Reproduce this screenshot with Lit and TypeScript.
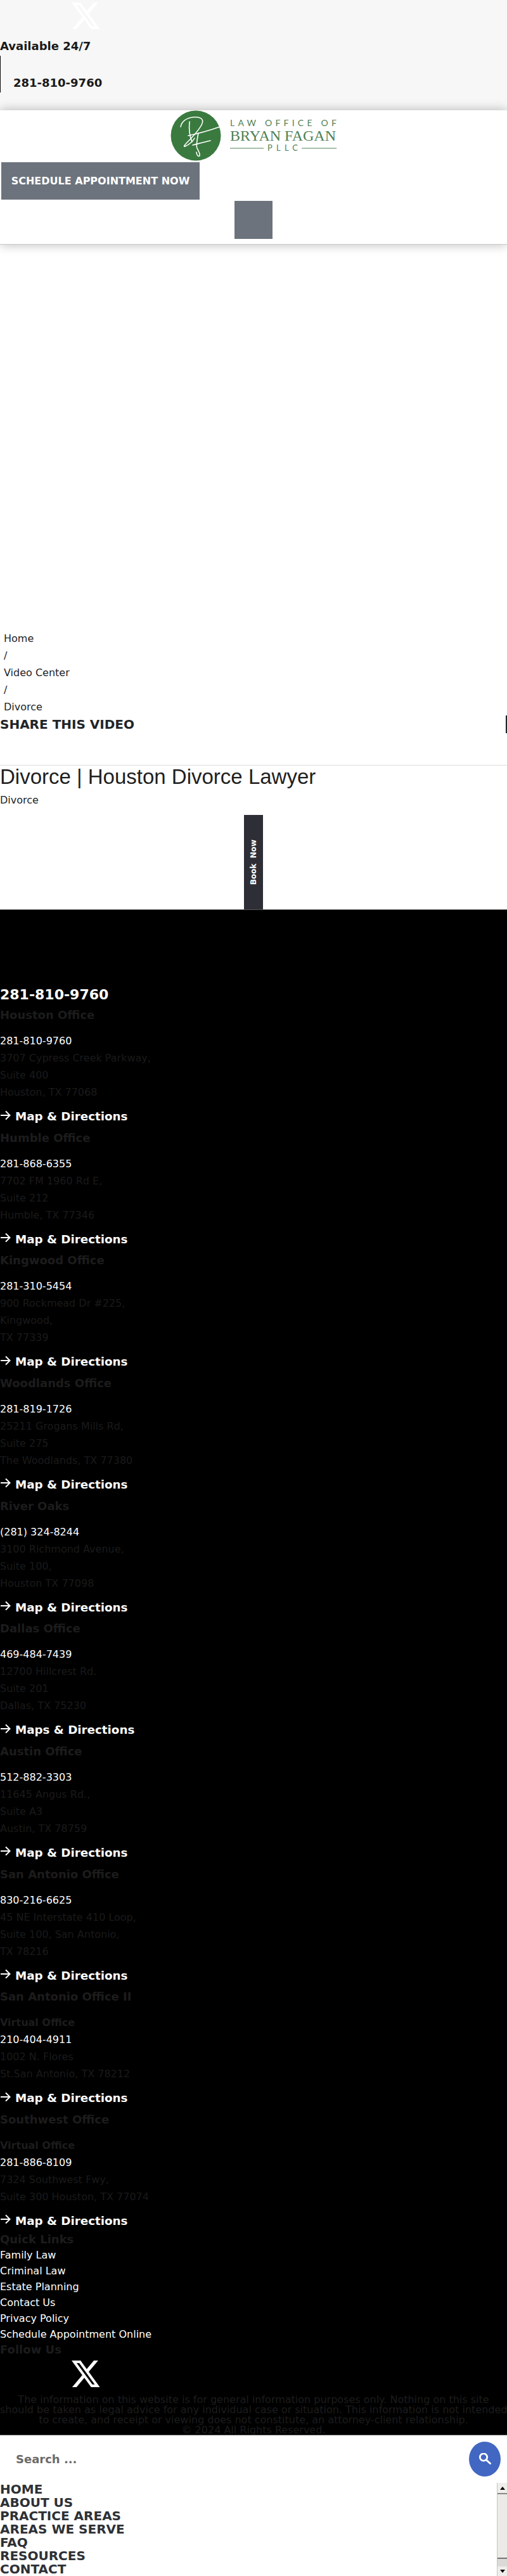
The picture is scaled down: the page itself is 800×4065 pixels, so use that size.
import { LitElement, html, css, svg } from "lit";
import { customElement } from "lit/decorators.js";

interface Office { name: string; sub?: string; phone: string; lines: string[]; map?: string; }
const OFFICES: Office[] = [
  { name: "Houston Office", phone: "281-810-9760", lines: ["3707 Cypress Creek Parkway,", "Suite 400", "Houston, TX 77068"] },
  { name: "Humble Office", phone: "281-868-6355", lines: ["7702 FM 1960 Rd E,", "Suite 212", "Humble, TX 77346"] },
  { name: "Kingwood Office", phone: "281-310-5454", lines: ["900 Rockmead Dr #225,", "Kingwood,", "TX 77339"] },
  { name: "Woodlands Office", phone: "281-819-1726", lines: ["25211 Grogans Mills Rd,", "Suite 275", "The Woodlands, TX 77380"] },
  { name: "River Oaks", phone: "(281) 324-8244", lines: ["3100 Richmond Avenue,", "Suite 100,", "Houston TX 77098"] },
  { name: "Dallas Office", phone: "469-484-7439", lines: ["12700 Hillcrest Rd.", "Suite 201", "Dallas, TX 75230"], map: "Maps & Directions" },
  { name: "Austin Office", phone: "512-882-3303", lines: ["11645 Angus Rd.,", "Suite A3", "Austin, TX 78759"] },
  { name: "San Antonio Office", phone: "830-216-6625", lines: ["45 NE Interstate 410 Loop,", "Suite 100, San Antonio,", "TX 78216"] },
  { name: "San Antonio Office II", sub: "Virtual Office", phone: "210-404-4911", lines: ["1002 N. Flores", "St.San Antonio, TX 78212"] },
  { name: "Southwest Office", sub: "Virtual Office", phone: "281-886-8109", lines: ["7324 Southwest Fwy,", "Suite 300 Houston, TX 77074"] },
];
const QUICK = ["Family Law", "Criminal Law", "Estate Planning", "Contact Us", "Privacy Policy", "Schedule Appointment Online"];
const MENU = ["HOME", "ABOUT US", "PRACTICE AREAS", "AREAS WE SERVE", "FAQ", "RESOURCES", "CONTACT"];

const xIcon = svg`<svg class="x" viewBox="1.25 2.25 21.31 19.5" width="44" height="42" preserveAspectRatio="none" aria-hidden="true">
  <path fill="#fff" d="M18.244 2.25h3.308l-7.227 8.26 8.502 11.24H16.17l-5.214-6.817L4.99 21.75H1.68l7.73-8.835L1.254 2.25H8.08l4.713 6.231zm-1.161 17.52h1.833L7.084 4.126H5.117z"/>
</svg>`;

const arrow = svg`<svg class="arrow" viewBox="0 0 17 16" width="17" height="16" aria-hidden="true">
  <path d="M1 8H15M9 1.5L15.5 8L9 14.5" fill="none" stroke="#fff" stroke-width="2"/></svg>`;

@customElement("app-root")
export class AppRoot extends LitElement {
  static styles = css`
    :host { display: block; width: 800px; height: 4065px; overflow: hidden; font-family: "DejaVu Sans", sans-serif; font-size: 16px; line-height: 27px; color: #212529; background: #fff; }
    a { color: inherit; text-decoration: none; }
    .top { height: 174px; background: #f6f7f6; box-sizing: border-box; padding-top: 4px; display: flex; flex-direction: column; }
    .top .x { margin-left: 113px; display: block; }
    .avail { margin-top: 13px; font-weight: 700; font-size: 18px; line-height: 27px; color: #1a1a1a; }
    .topphone { margin-top: 2px; height: 58px; width: fit-content; border-left: 1px solid #111; padding: 29px 0 0 20px; box-sizing: border-box; font-weight: 700; font-size: 18px; line-height: 27px; color: #1a1a1a; }
    .header { position: relative; height: 212px; background: #fff; box-shadow: 0 0 16px rgba(0,0,0,.28); display: flex; flex-direction: column; border-bottom: 1px solid #ccc; box-sizing: border-box; }
    .logo { display: block; margin-left: 260px; width: 290px; height: 82px; }
    .cta { margin-left: 2px; width: 313px; height: 59px; background: #6c737d; color: #fff; font-weight: 700; font-size: 16px; display: flex; align-items: center; justify-content: center; }
    .sq { margin: 2px 0 0 370px; width: 60px; height: 60px; background: #6c737d; }
    .crumbs { margin-top: 608px; padding-left: 6px; height: 135px; }
    .crumbs div { height: 27px; }
    .share { display: flex; justify-content: space-between; align-items: center; height: 28px; font-weight: 700; font-size: 20px; line-height: 28px; }
    .share i { display: block; width: 2px; height: 28px; background: #212529; }
    .rule { margin-top: 50px; border-top: 1px solid #ddd; }
    h1 { margin: 0; font: 400 33px/36px "Liberation Sans", Arial, sans-serif; color: #1f1f1f; }
    .sub { margin-top: 5px; }
    .bookwrap { display: flex; justify-content: center; margin-top: 10px; }
    .book { width: 30px; height: 149px; background: #2e2f36; color: #fff; display: flex; align-items: center; justify-content: center; }
    .book span { writing-mode: vertical-rl; transform: rotate(180deg); font: 700 12px "DejaVu Sans", sans-serif; white-space: pre; }
    footer { background: #000; height: 2408px; border-top: 1px solid #555; border-bottom: 1px solid #555; box-sizing: border-box; overflow: hidden; padding-top: 120px; }
    .bigphone { font-weight: 700; font-size: 22px; line-height: 28px; color: #fff; margin-bottom: 4px; }
    .hd { font-weight: 700; font-size: 18px; line-height: 27px; color: #1c1c1c; margin: 0; }
    .office .hd { margin-bottom: 14px; }
    .office { padding-bottom: 6.67px; }
    .vo { font-weight: 700; color: #1c1c1c; }
    .ph { color: #fff; }
    .ad { color: #1a1a1a; }
    .map { margin-top: 11px; display: flex; align-items: center; gap: 7px; font-weight: 700; font-size: 18.3px; color: #fff; }
    .arrow { margin-bottom: 4px; }
    .quick { margin-top: -2.8px; }
    .quick .hd { line-height: 24px; }
    .quick a { display: block; height: 25px; line-height: 25px; color: #fff; }
    .follow .hd { line-height: 24px; }
    .follow .x { display: block; margin: 5px 0 0 113px; }
    .legal { margin-top: 12px; text-align: center; line-height: 16px; color: #1c1c1c; white-space: nowrap; }
    .search { height: 75px; box-sizing: border-box; display: flex; align-items: center; justify-content: space-between; padding: 0 10px 0 25px; }
    .search span { font-weight: 700; font-size: 18px; color: #6b6b6b; }
    .go { width: 50px; height: 55px; border-radius: 50%; background: #4267c2; display: flex; align-items: center; justify-content: center; }
    .nav { display: flex; justify-content: space-between; height: 147px; }
    .nav ul { list-style: none; margin: 0; padding: 0; font-weight: 700; font-size: 20px; line-height: 21px; color: #2e3136; }
    .nav li { height: 21px; }
    .sb { width: 16px; background: #dcdad6; display: flex; flex-direction: column; border-left: 1px solid #c8c6c2; box-sizing: border-box; }
    .sb b { display: flex; height: 15px; background: #f0eeea; align-items: center; justify-content: center; }
    .sb .up { border-bottom: 2px solid #888; height: 16px; }
    .sb b::before { content: ""; border-left: 4px solid transparent; border-right: 4px solid transparent; }
    .sb .up::before { border-bottom: 5px solid #000; }
    .sb .down::before { border-top: 5px solid #000; }
    .sb u { display: block; height: 102px; box-sizing: border-box; background: #eceae6; border-bottom: 2px solid #777; }
    .sb s { display: block; flex: 1; }
  `;

  office(o: Office) {
    return html`<div class="office">
      <h4 class="hd">${o.name}</h4>
      ${o.sub ? html`<div class="vo">${o.sub}</div>` : ""}
      <div class="ph">${o.phone}</div>
      ${o.lines.map((l) => html`<div class="ad">${l}</div>`)}
      <a class="map">${arrow}<span>${o.map ?? "Map & Directions"}</span></a>
    </div>`;
  }

  render() {
    return html`
      <div class="top">
        ${xIcon}
        <div class="avail">Available 24/7</div>
        <div class="topphone">281-810-9760</div>
      </div>
      <div class="header">
        <svg class="logo" viewBox="0 0 290 82" aria-label="Law Office of Bryan Fagan PLLC">
          <circle cx="49" cy="40" r="39.5" fill="#3a7a3f"/>
          <g fill="none" stroke="#fff" stroke-width="1.6" stroke-linecap="round">
            <path d="M25 26C27 17 35 12 45 11C55 10 62 13 59 21C55 30 42 44 35 51C31 55 29 58 32 57C38 55 45 48 47 44"/>
            <path d="M39 18C38 28 39 40 43 50"/>
            <path d="M37 40C52 37 70 32 87 26"/>
            <path d="M44 55C52 53 62 50 72 48"/>
            <path d="M53 36C51 46 49 56 51 60C53 64 56 68 55 72C53 74 50 70 50 66"/>
          </g>
          <g fill="#4f8154">
            <text x="103" y="25" font-family="Lato, sans-serif" font-weight="400" font-size="14" textLength="168" lengthAdjust="spacing">LAW OFFICE OF</text>
            <text x="103" y="48" font-family="Liberation Serif, serif" font-size="24" textLength="167" lengthAdjust="spacingAndGlyphs">BRYAN FAGAN</text>
            <text x="162" y="64" font-family="Lato, sans-serif" font-weight="400" font-size="13" textLength="48" lengthAdjust="spacing">PLLC</text>
          </g>
          <path d="M103 60H156M216 60H271" stroke="#4f8154" stroke-width="1"/>
        </svg>
        <a class="cta">SCHEDULE APPOINTMENT NOW</a>
        <div class="sq"></div>
      </div>
      <div class="crumbs">
        <div>Home</div><div>/</div><div>Video Center</div><div>/</div><div>Divorce</div>
      </div>
      <div class="share"><span>SHARE THIS VIDEO</span><i></i></div>
      <div class="rule"></div>
      <h1>Divorce | Houston Divorce Lawyer</h1>
      <div class="sub">Divorce</div>
      <div class="bookwrap"><a class="book"><span>Book  Now</span></a></div>
      <footer>
        <div class="bigphone">281-810-9760</div>
        ${OFFICES.map((o) => this.office(o))}
        <div class="quick">
          <h4 class="hd">Quick Links</h4>
          ${QUICK.map((q) => html`<a>${q}</a>`)}
        </div>
        <div class="follow">
          <h4 class="hd">Follow Us</h4>
          ${xIcon}
        </div>
        <div class="legal">The information on this website is for general information purposes only. Nothing on this site<br>should be taken as legal advice for any individual case or situation. This information is not intended<br>to create, and receipt or viewing does not constitute, an attorney-client relationship.<br>© 2024 All Rights Reserved.</div>
      </footer>
      <div class="search">
        <span>Search ...</span>
        <div class="go"><svg viewBox="0 0 20 20" width="20" height="20" aria-hidden="true"><circle cx="8" cy="6.5" r="5.7" fill="none" stroke="#fff" stroke-width="2.8"/><path d="M12 10.5L18.5 16.5" stroke="#fff" stroke-width="3" stroke-linecap="round"/></svg></div>
      </div>
      <div class="nav">
        <ul>${MENU.map((m) => html`<li>${m}</li>`)}</ul>
        <div class="sb"><b class="up"></b><u></u><s></s><b class="down"></b></div>
      </div>
    `;
  }
}
